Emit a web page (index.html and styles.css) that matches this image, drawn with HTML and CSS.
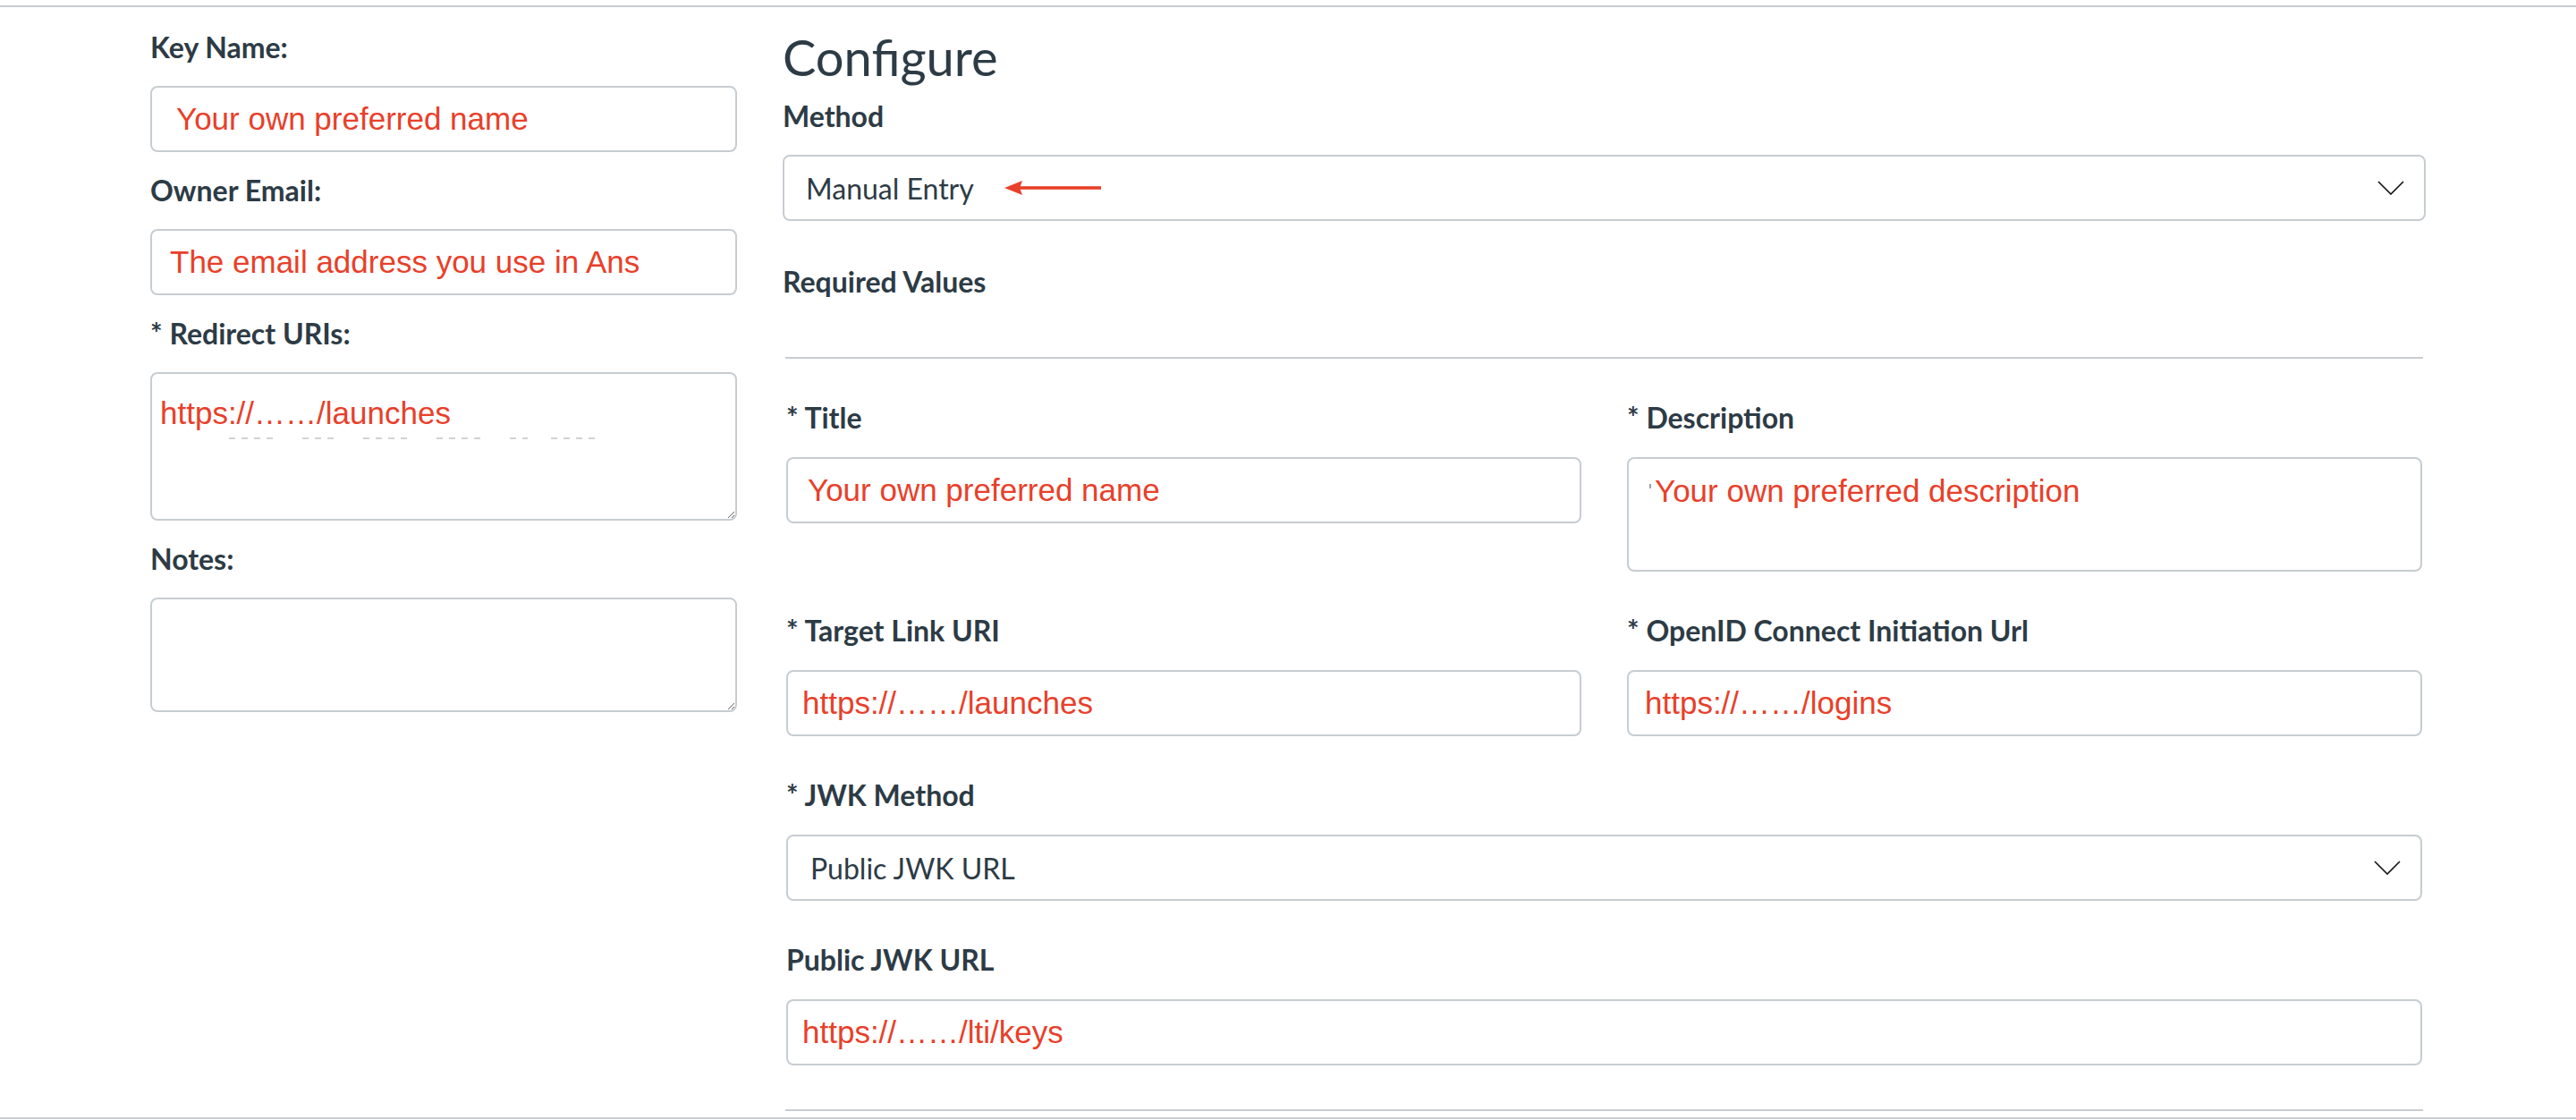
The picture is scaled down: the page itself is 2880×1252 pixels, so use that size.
FILE: index.html
```html
<!DOCTYPE html>
<html lang="en">
<head>
<meta charset="utf-8">
<title>Developer Key – Configure</title>
<link rel="stylesheet" href="styles.css">
</head>
<body>
<div class="page">
  <div class="main">
    <div class="left">
      <div class="group">
        <div class="label">Key Name:</div>
        <div class="box pl-keyname"><span class="note">Your own preferred name</span></div>
      </div>
      <div class="group">
        <div class="label">Owner Email:</div>
        <div class="box pl-email"><span class="note">The email address you use in Ans</span></div>
      </div>
      <div class="group">
        <div class="label">* Redirect URIs:</div>
        <div class="area-wrap">
          <textarea class="area area-redirect">https://……/launches</textarea>
          <div class="ghost">
            <i class="g g1"></i><i class="g g2"></i><i class="g g3"></i><i class="g g4"></i><i class="g g5"></i><i class="g g6"></i>
          </div>
        </div>
      </div>
      <div class="group">
        <div class="label">Notes:</div>
        <textarea class="area area-notes"></textarea>
      </div>
    </div>

    <div class="right">
      <h2 class="heading">Configure</h2>
      <div class="label method-label">Method</div>
      <div class="select">
        <span>Manual Entry</span>
        <svg class="arrow" width="108" height="18" viewBox="0 0 108 18" aria-hidden="true">
          <polygon points="0,9 20,1 17,9 20,17" fill="#e8402a"/>
          <rect x="16" y="7.2" width="92" height="3.6" fill="#e8402a"/>
        </svg>
        <svg class="chev" width="30" height="16" viewBox="0 0 30 16" aria-hidden="true">
          <polyline points="1,1 15,15 29,1" fill="none" stroke="#111" stroke-width="1.6"/>
        </svg>
      </div>
      <div class="label req-label">Required Values</div>
      <div class="rule"></div>

      <div class="section">
        <div class="cell">
          <div class="label">* Title</div>
          <div class="box pl-title"><span class="note">Your own preferred name</span></div>
        </div>
        <div class="cell">
          <div class="label">* Description</div>
          <div class="box box-tall pl-desc"><span class="caret"></span><span class="note">Your own preferred description</span></div>
        </div>
        <div class="cell">
          <div class="label">* Target Link URI</div>
          <div class="box pl-url"><span class="note">https://……/launches</span></div>
        </div>
        <div class="cell">
          <div class="label">* OpenID Connect Initiation Url</div>
          <div class="box pl-openid"><span class="note">https://……/logins</span></div>
        </div>
        <div class="cell span2">
          <div class="label">* JWK Method</div>
          <div class="select select-jwk">
            <span>Public JWK URL</span>
            <svg class="chev" width="30" height="16" viewBox="0 0 30 16" aria-hidden="true">
              <polyline points="1,1 15,15 29,1" fill="none" stroke="#111" stroke-width="1.6"/>
            </svg>
          </div>
        </div>
        <div class="cell span2">
          <div class="label">Public JWK URL</div>
          <div class="box pl-url"><span class="note">https://……/lti/keys</span></div>
        </div>
      </div>
      <div class="rule rule-end"></div>
    </div>
  </div>
</div>
</body>
</html>
```
FILE: styles.css
```css
* {
  box-sizing: border-box;
}

html,
body {
  margin: 0;
  padding: 0;
  background: #fff;
}

body {
  width: 2880px;
  height: 1252px;
  overflow: hidden;
  font-family: Lato, "Noto Sans", sans-serif;
  color: #2d3b45;
}

.page {
  padding-top: 6px;
}

.main {
  height: 1245px;
  border-top: 2px solid #c7cdd1;
  border-bottom: 2px solid #c7cdd1;
  padding: 21px 168px 0;
  display: grid;
  grid-template-columns: 656px 1fr;
  column-gap: 51px;
  align-items: start;
  overflow: hidden;
}

.label {
  font-weight: 700;
  font-size: 32px;
  line-height: 48px;
  margin: 0 0 19px;
  white-space: nowrap;
}

.left .group {
  margin-bottom: 19px;
}

.box {
  height: 74px;
  border: 2px solid #c7cdd1;
  border-radius: 8px;
  background: #fff;
  display: flex;
  align-items: center;
}

.box-tall {
  height: 128px;
  align-items: flex-start;
  padding-top: 16px;
}

.note {
  font-family: "Liberation Sans", Arial, sans-serif;
  font-size: 35px;
  line-height: 40px;
  color: #e8402a;
  white-space: nowrap;
}

.pl-keyname { padding-left: 27px; }
.pl-email { padding-left: 20px; }
.pl-title { padding-left: 22px; }
.pl-desc { padding-left: 23px; }
.pl-url { padding-left: 16px; }
.pl-openid { padding-left: 18px; }

.caret {
  display: inline-block;
  width: 2px;
  height: 5px;
  margin: 12px 4px 0 0;
  background: #9aa0a6;
}

.area-wrap {
  position: relative;
}

.area {
  display: block;
  width: 100%;
  margin: 0;
  border: 2px solid #c7cdd1;
  border-radius: 8px;
  background: #fff;
  outline: none;
  font-family: "Liberation Sans", Arial, sans-serif;
  font-size: 35px;
  line-height: 40px;
  color: #e8402a;
}

.area-redirect {
  height: 166px;
  padding: 24px 10px 0 9px;
}

.area-notes {
  height: 128px;
  padding: 10px;
}

.ghost {
  position: absolute;
  left: 88px;
  top: 73px;
  display: flex;
  gap: 26px;
}

.g {
  display: block;
  height: 2px;
  background: repeating-linear-gradient(90deg, #d2d2d2 0 7px, transparent 7px 14px);
}

.g1 { width: 56px; }
.g2 { width: 42px; }
.g3 { width: 56px; }
.g4 { width: 56px; }
.g5 { width: 20px; }
.g6 { width: 50px; }

.heading {
  margin: 0;
  font-weight: 400;
  font-size: 56px;
  line-height: 70px;
  color: #2d3b45;
}

.method-label {
  margin-top: 7px;
}

.select {
  height: 74px;
  border: 2px solid #c7cdd1;
  border-radius: 8px;
  background: #fff;
  display: flex;
  align-items: center;
  padding: 0 22px 0 24px;
  font-size: 32px;
  color: #2d3b45;
}

.select-jwk {
  padding-left: 25px;
}

.arrow {
  margin-left: 34px;
  display: block;
}

.chev {
  margin-left: auto;
  display: block;
}

.req-label {
  margin-top: 44px;
  margin-bottom: 0;
}

.rule {
  height: 2px;
  background: #c7cdd1;
  margin: 60px 3px 42px;
}

.rule-end {
  margin: 49px 3px 0;
}

.section {
  margin: 0 4px;
  display: grid;
  grid-template-columns: 1fr 1fr;
  column-gap: 51px;
  row-gap: 42px;
  align-items: start;
}

.section .label {
  margin-bottom: 20px;
}

.span2 {
  grid-column: 1 / -1;
}
```
